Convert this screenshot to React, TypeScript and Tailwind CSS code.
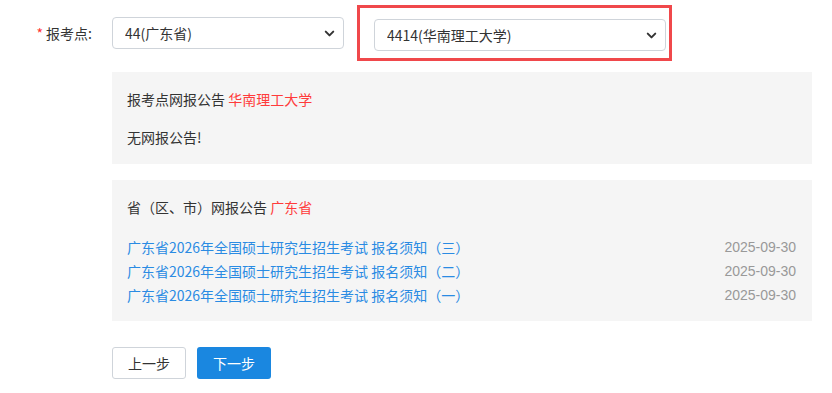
import {ChevronDown} from 'lucide-react';

const notices = [
  {title: '广东省2026年全国硕士研究生招生考试 报名须知（三）', date: '2025-09-30'},
  {title: '广东省2026年全国硕士研究生招生考试 报名须知（二）', date: '2025-09-30'},
  {title: '广东省2026年全国硕士研究生招生考试 报名须知（一）', date: '2025-09-30'},
];

const Picker = ({value, width}: {value: string; width: string}) => {
  return (
    <div className={`relative h-[32px] ${width}`}>
      <select
        defaultValue={value}
        className="h-full w-full appearance-none rounded-[4px] border border-[#cfd4da] bg-white pl-[12px] pr-8 text-[14px] text-[#333] outline-none"
      >
        <option value={value}>{value}</option>
      </select>
      <ChevronDown
        className="pointer-events-none absolute right-[7px] top-[9px] h-[15px] w-[15px] text-[#333]"
        strokeWidth={3.2}
      />
    </div>
  );
};

const App = () => {
  return (
    <div
      className="h-[393px] w-[832px] bg-white pt-[5px] text-[14px] text-[#333]"
      style={{fontFamily: '"Noto Sans CJK SC", "Noto Sans", sans-serif'}}
    >
      <div className="flex items-center">
        <label className="flex w-[112px] items-center justify-end pr-[20px] text-[14px] text-[#333]">
          <span className="mr-[3px] text-[#ff3333]">*</span>
          报考点:
        </label>
        <Picker value="44(广东省)" width="w-[232px]" />
        <div className="ml-[13px] border-[3px] border-[#f0484b] pb-[7px] pl-[14px] pr-[3px] pt-[11px]">
          <Picker value="4414(华南理工大学)" width="w-[292px]" />
        </div>
      </div>

      <div className="ml-[112px] mt-[11px] w-[700px]">
        <div className="h-[92px] bg-[#f5f5f5] px-[15px] pt-[17px]">
          <p className="leading-[20px]">
            报考点网报公告 <span className="text-[#ff3b3b]">华南理工大学</span>
          </p>
          <p className="mt-[18px] leading-[20px]">无网报公告!</p>
        </div>

        <div className="mt-[16px] h-[141px] bg-[#f5f5f5] pl-[15px] pr-[16px] pt-[17px]">
          <p className="leading-[20px]">
            省（区、市）网报公告 <span className="text-[#ff3b3b]">广东省</span>
          </p>
          <ul className="mt-[18px]">
            {notices.map((n, i) => (
              <li key={i} className="flex h-[24px] items-center justify-between">
                <a href="#" className="text-[#2a8be3]">
                  {n.title}
                </a>
                <span
                  className="text-[#999]"
                  style={{fontFamily: '"Liberation Sans", Arial, sans-serif'}}
                >
                  {n.date}
                </span>
              </li>
            ))}
          </ul>
        </div>

        <div className="mt-[26px] flex gap-[11px]">
          <button className="h-[32px] w-[74px] rounded-[3px] border border-[#cfd4da] bg-white text-[14px] text-[#333]">
            上一步
          </button>
          <button className="h-[32px] w-[74px] rounded-[3px] bg-[#1a87e0] text-[14px] text-white">
            下一步
          </button>
        </div>
      </div>
    </div>
  );
};

export default App;
